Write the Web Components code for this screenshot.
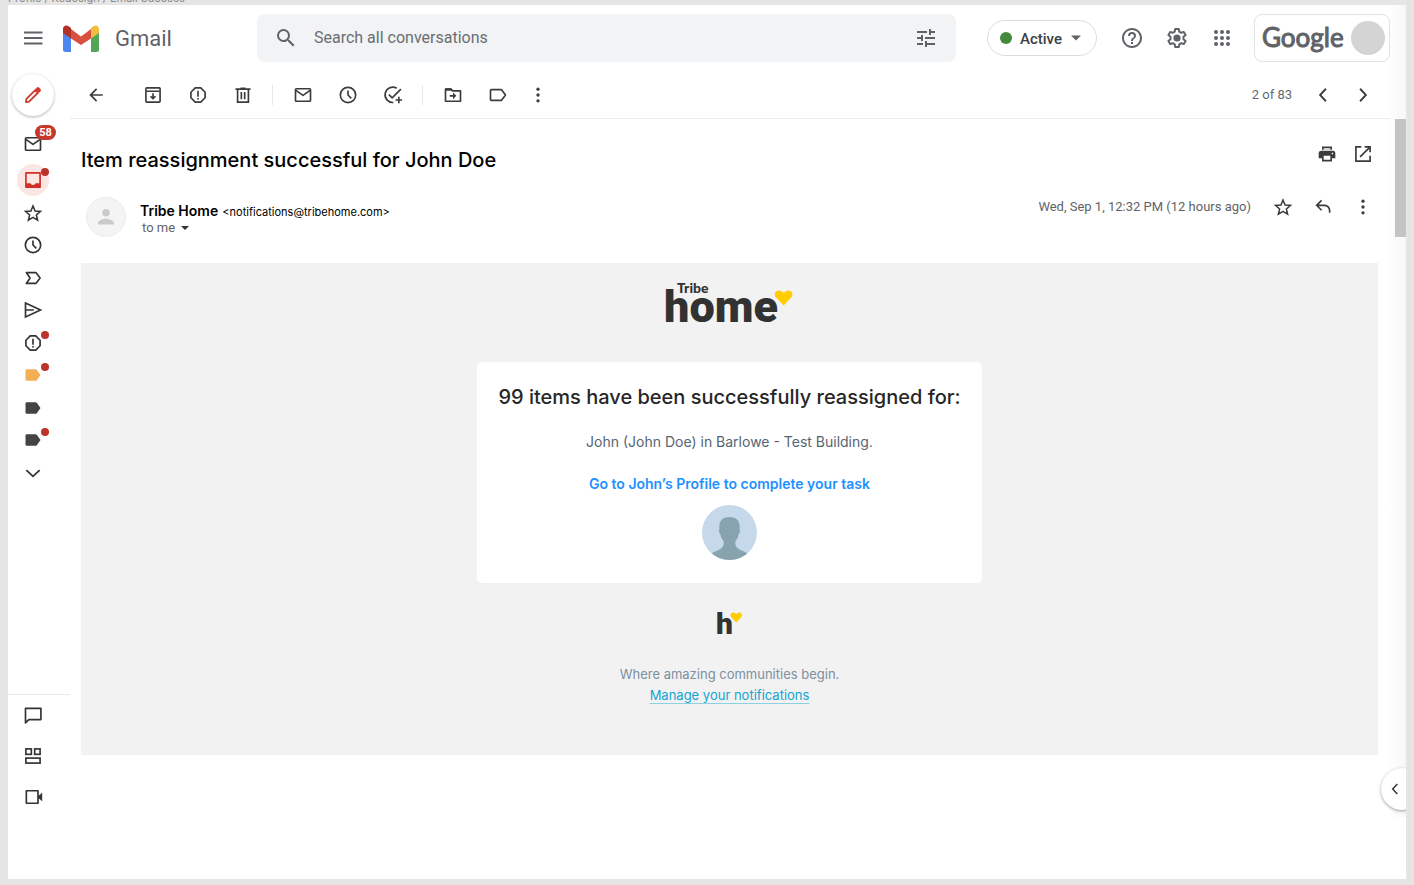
<!DOCTYPE html>
<html lang="en">
<head>
<meta charset="utf-8">
<title>Gmail</title>
<style>
html,body{margin:0;height:100%}
body{background:#e5e5e5;font-family:Roboto,"Liberation Sans",sans-serif;color:#202124}
</style>
</head>
<body>
<mail-app></mail-app>
<script>
const ICONS = {
menu:'<path d="M3 5.500h18.500v2H3zM3 11h18.500v2H3zM3 16.500h18.500v2H3z"/>',
search:'<path d="M15.5 14h-.79l-.28-.27A6.47 6.47 0 0 0 16 9.5 6.5 6.5 0 1 0 9.5 16c1.61 0 3.09-.59 4.23-1.57l.27.28v.79l5 4.99L20.49 19l-4.99-5zm-6 0a4.5 4.5 0 1 1 0-9 4.5 4.5 0 0 1 0 9z"/>',
tune:'<path d="M3 17v2h6v-2H3zM3 5v2h10V5H3zm10 16v-2h8v-2h-8v-2h-2v6h2zM7 9v2H3v2h4v2h2V9H7zm14 4v-2H11v2h10zm-6-4h2V7h4V5h-4V3h-2v6z"/>',
help:'<path d="M11 16h2v2h-2zM12 2C6.480 2 2 6.480 2 12s4.480 10 10 10 10-4.480 10-10S17.520 2 12 2zm0 18c-4.410 0-8-3.590-8-8s3.590-8 8-8 8 3.590 8 8-3.590 8-8 8zm0-14a4 4 0 0 0-4 4h2c0-1.100.9-2 2-2s2 .9 2 2c0 2-3 1.750-3 5h2c0-2.250 3-2.500 3-5a4 4 0 0 0-4-4z"/>',
settings:'<path fill="none" stroke="currentColor" stroke-width="2" stroke-linejoin="round" d="M10.200 3h3.600l.5 2.700 1.900 1.100 2.600-.9 1.800 3.100-2.100 1.800v2.400l2.100 1.800-1.800 3.100-2.600-.9-1.900 1.100-.5 2.700h-3.600l-.5-2.700-1.900-1.100-2.600.9-1.800-3.100 2.100-1.800v-2.400L3.400 9l1.800-3.100 2.600.9 1.900-1.100z"/><circle cx="12" cy="12" r="3.600"/>',
apps:'<g><circle cx="6" cy="6" r="2"/><circle cx="12" cy="6" r="2"/><circle cx="18" cy="6" r="2"/><circle cx="6" cy="12" r="2"/><circle cx="12" cy="12" r="2"/><circle cx="18" cy="12" r="2"/><circle cx="6" cy="18" r="2"/><circle cx="12" cy="18" r="2"/><circle cx="18" cy="18" r="2"/></g>',
caret:'<path d="M6 9l6 6 6-6z"/>',
pencil:'<path fill="none" stroke="currentColor" stroke-width="2.200" stroke-linejoin="round" d="M3.500 20.500l.6-3.800L14.700 6.100l3.200 3.200L7.300 19.900z"/><path d="M14.500 5.100l1.800-1.900a2.300 2.300 0 0 1 3.200 0l1.300 1.300a2.300 2.300 0 0 1 0 3.200L18.900 9.500z"/>',
back:'<path d="M20 11H7.830l5.590-5.590L12 4l-8 8 8 8 1.410-1.410L7.830 13H20z"/>',
archive:'<g fill="none" stroke="currentColor" stroke-width="2" stroke-linejoin="round"><rect x="3.500" y="3.500" width="17" height="17" rx="1"/><path d="M4 7.500h16M12 10v6.500M9 13.500l3 3 3-3"/></g>',
report:'<path fill="none" stroke="currentColor" stroke-width="2" stroke-linejoin="round" d="M8.700 3.500h6.600l5.200 5.200v6.600l-5.200 5.200H8.700l-5.200-5.200V8.700z"/><path d="M11 7h2v7h-2zM11 15.500h2v2h-2z"/>',
trash:'<g fill="none" stroke="currentColor" stroke-width="2"><path d="M3 5h18M5.500 5v15.500h13V5"/><path d="M10 8.500v8.500M14 8.500v8.500"/></g><path d="M9 3h6v2H9z"/>',
mail:'<g fill="none" stroke="currentColor" stroke-width="2" stroke-linejoin="round"><rect x="3" y="4.500" width="18" height="15" rx="1"/><path d="M3.500 6.500L12 12.500l8.500-6"/></g>',
clock:'<g fill="none" stroke="currentColor" stroke-width="2"><circle cx="12" cy="12" r="9.200"/><path d="M12 6.500V12l4 4"/></g>',
task:'<g fill="none" stroke="currentColor" stroke-width="2"><path d="M16.500 4A9.200 9.200 0 1 0 12.500 21M7 11.500l4 4L21.500 5M19 14v8M15 18h8"/></g>',
move:'<path fill="none" stroke="currentColor" stroke-width="2" stroke-linejoin="round" d="M3 5h6.500l2 2H21v12.500H3z"/><path d="M3 4h7l2 3H3zM12 9l4 4-4 4v-3H8v-2h4z"/>',
label:'<path fill="none" stroke="currentColor" stroke-width="2" stroke-linejoin="round" d="M4 5.500h12L21 12l-5 6.500H4a1 1 0 0 1-1-1v-11a1 1 0 0 1 1-1z"/>',
labelfill:'<path d="M4.500 5H15c.700 0 1.300.3 1.600.8L21 12l-4.400 6.200c-.3.500-.9.800-1.600.8H4.500A1.500 1.500 0 0 1 3 17.500v-11A1.500 1.500 0 0 1 4.500 5z"/>',
more:'<circle cx="12" cy="5" r="2"/><circle cx="12" cy="12" r="2"/><circle cx="12" cy="19" r="2"/>',
left:'<path fill="none" stroke="currentColor" stroke-width="2.200" d="M15.500 4.500L8.500 12l7 7.500"/>',
right:'<path fill="none" stroke="currentColor" stroke-width="2.200" d="M8.500 4.500l7 7.500-7 7.500"/>',
down:'<path fill="none" stroke="currentColor" stroke-width="2.200" d="M4 8.500l8 7.500 8-7.500"/>',
inbox:'<path fill="none" stroke="currentColor" stroke-width="2" stroke-linejoin="round" d="M3.500 3.500h17v17h-17z"/><path d="M3 16h6c.5 1.300 1.500 2 3 2s2.500-.7 3-2h6v5H3z"/>',
star:'<path fill="none" stroke="currentColor" stroke-width="1.800" d="M12 3.600l2.500 6 6.500.5-4.950 4.250 1.500 6.300L12 17.300l-5.550 3.350 1.500-6.300L3 10.100l6.500-.5z"/>',
important:'<path fill="none" stroke="currentColor" stroke-width="2" stroke-linejoin="round" d="M4 5.500h11.500L20.500 12l-5 6.500H4L8.500 12z"/>',
send:'<path fill="none" stroke="currentColor" stroke-width="2" d="M3 3.700L21 12 3 20.300zM3 12h10"/>',
chat:'<path fill="none" stroke="currentColor" stroke-width="2" stroke-linejoin="round" d="M3 21.500V4h18.500v13.500H7z"/>',
rooms:'<g fill="none" stroke="currentColor" stroke-width="2"><rect x="3.500" y="3.500" width="6.500" height="6.500"/><rect x="14" y="3.500" width="6.500" height="6.500"/><rect x="3.500" y="14.500" width="17" height="6"/></g>',
video:'<path fill="none" stroke="currentColor" stroke-width="2" stroke-linejoin="round" d="M4 4.500h14v15H4z"/><path d="M18 11l5-4v10l-5-4z"/>',
print:'<path d="M6 3h12v4H6zM5 8h14a3 3 0 0 1 3 3v6h-4v4H6v-4H2v-6a3 3 0 0 1 3-3z"/><path fill="#fff" d="M8 5h8v2H8zM8 14h8v5H8z"/><circle fill="#fff" cx="18.500" cy="11.500" r="1"/>',
open:'<path d="M19.500 19.500h-15v-15H10v-2H2.500v19h19V14h-2zM14 2.500v2h4.100l-10.300 10.300 1.400 1.400L19.500 5.900V10h2V2.500z"/>',
reply:'<path d="M10 9h3c5 0 8 3 8 8v2h-2v-2c0-4-2-6-6-6H6.800L11 15.200 9.600 16.600 3 10l6.600-6.600L11 4.800 6.800 9z"/>',
person:'<circle cx="12" cy="7" r="4.500"/><path d="M2.500 21v-2c0-3 6-5 9.500-5s9.500 2 9.500 5v2z"/>'
};
function define(name, html, setup){
  const t = document.createElement('template');
  t.innerHTML = html;
  customElements.define(name, class extends HTMLElement{
    connectedCallback(){
      if(this.shadowRoot) return;
      this.attachShadow({mode:'open'}).append(t.content.cloneNode(true));
      if(setup) setup(this, this.shadowRoot);
    }
  });
}

define('g-icon','<style>:host{display:inline-flex;flex:none;width:20px;height:20px}svg{width:100%;height:100%;fill:currentColor;display:block}</style><svg viewBox="0 0 24 24" aria-hidden="true"></svg>',
  (el,r)=>{ r.querySelector('svg').innerHTML = ICONS[el.getAttribute('name')]; });

define('icon-button',`<style>
:host{display:flex;flex:none;width:45px;height:40px;color:#3c3c3c}
button{all:unset;box-sizing:border-box;width:100%;height:100%;display:flex;align-items:center;justify-content:center;cursor:pointer}
:host([large]) g-icon{width:24px;height:24px}
:host([large]){color:#5f6368}
</style><button type="button"></button>`,
  (el,r)=>{ const b=r.querySelector('button'); b.setAttribute('aria-label',el.getAttribute('label')); b.innerHTML='<g-icon name="'+el.getAttribute('icon')+'"></g-icon>'; });

define('nav-item',`<style>
:host{display:flex;flex:1;position:relative;width:50px;align-items:center;justify-content:center;color:#333}
a{display:flex;align-items:center;justify-content:center;width:32px;height:32px;border-radius:50%;color:inherit;text-decoration:none}
:host([active]) a{background:#fbe6e4;color:#d03025}
:host([orange]) a{color:#f4ae56}
:host([dark]) a{color:#444}
i{position:absolute;left:33px;top:calc(50% - 12px);width:8px;height:8px;border-radius:50%;background:#ba342b}
b{position:absolute;left:27px;top:calc(50% - 19px);min-width:21px;height:15px;border-radius:8px;background:#c5392d;color:#fff;font:700 11px/15px Roboto,sans-serif;text-align:center}
</style><a href="#"></a>`,
  (el,r)=>{ const a=r.querySelector('a'); a.setAttribute('aria-label',el.getAttribute('label')); a.innerHTML='<g-icon name="'+el.getAttribute('icon')+'"></g-icon>';
    if(el.hasAttribute('dot')) r.append(document.createElement('i'));
    if(el.hasAttribute('count')){const b=document.createElement('b'); b.textContent=el.getAttribute('count'); r.append(b);} });

define('app-header',`<style>
:host{display:flex;align-items:center;height:66px;padding-right:16px;box-sizing:border-box}
.brand{display:flex;align-items:center;width:249px;flex:none;color:#5f6368}
.brand icon-button{width:50px}
.brand svg{width:36px;height:27px;margin:0 16px 0 5px}
.brand span{font-size:22px;line-height:28px;padding-top:2px}
form{flex:1;display:flex;align-items:center;height:48px;background:#f1f3f4;border-radius:8px;margin-right:31px;color:#5f6368;min-width:0}
form icon-button{width:57px}
form icon-button:last-child{width:60px}
input{all:unset;flex:1;min-width:0;font-size:16px;line-height:24px;color:#5f6368}
input::placeholder{color:#6a6e73;opacity:1}
.status{all:unset;box-sizing:border-box;display:flex;align-items:center;width:110px;height:36px;margin-right:12px;padding:0 11px 0 12px;border:1px solid #dadce0;border-radius:18px;font-size:15px;font-weight:500;color:#3c4043;cursor:pointer}
.status i{width:12px;height:12px;border-radius:50%;background:#43893e;margin-right:8px}
.status span{flex:1;padding-top:1px}
.status g-icon{width:20px;height:20px;color:#5f6368;margin-right:-1px}
.account{all:unset;box-sizing:border-box;display:flex;align-items:center;justify-content:space-between;width:136px;height:48px;margin-left:10px;padding:0 4px 0 7px;border:1px solid #e0e2e5;border-radius:8px;cursor:pointer}
.account span{font:400 26px/32px Lato,sans-serif;color:#5f6368;-webkit-text-stroke:1px #5f6368;padding-bottom:2px}
.account i{width:34px;height:34px;border-radius:50%;background:#d4d4d4}
</style>
<div class="brand"><icon-button icon="menu" label="Main menu" large></icon-button>
<svg viewBox="0 0 36 27" aria-hidden="true"><path fill="#4d86ee" d="M0 7l8 6v14H2.500A2.500 2.500 0 0 1 0 24.500z"/><path fill="#53a659" d="M36 7l-8 6v14h5.500a2.500 2.500 0 0 0 2.500-2.500z"/><path fill="#d94f3f" d="M8 4l10 7.500L28 4v9.500L18 20 8 13.500z"/><path fill="#b43128" d="M0 8V4c0-3.500 3.500-4.500 6-2.500L8 3v10.500z"/><path fill="#f2bd42" d="M36 8V4c0-3.500-3.500-4.500-6-2.500L28 3v10.500z"/></svg>
<span>Gmail</span></div>
<form role="search"><icon-button icon="search" label="Search" large></icon-button><input type="text" aria-label="Search all conversations" placeholder="Search all conversations"><icon-button icon="tune" label="Search options" large></icon-button></form>
<button class="status" type="button"><i></i><span>Active</span><g-icon name="caret"></g-icon></button>
<icon-button icon="help" label="Support" large></icon-button><icon-button icon="settings" label="Settings" large></icon-button><icon-button icon="apps" label="Apps" large></icon-button>
<button class="account" type="button" aria-label="Google Account"><span>Google</span><i></i></button>`);

define('side-nav',`<style>
:host{display:flex;flex-direction:column;flex:none;width:62px}
.compose{all:unset;display:flex;align-items:center;justify-content:center;width:42px;height:42px;margin:3px 0 0 4px;border-radius:50%;background:#fff;color:#d03b30;box-shadow:0 1px 3px rgba(60,64,67,.4);cursor:pointer}
.mail{display:flex;width:50px;height:32px;margin:12px 0 4px}
nav{display:flex;flex-direction:column;height:325px;flex:none}
.apps{height:122px;margin-top:auto;margin-bottom:62px;border-top:1px solid #ebebeb}
</style>
<button class="compose" type="button" aria-label="Compose"><g-icon name="pencil"></g-icon></button>
<div class="mail"><nav-item icon="mail" label="Mail" count="58"></nav-item></div>
<nav aria-label="Mailboxes">
<nav-item icon="inbox" label="Inbox" active dot></nav-item><nav-item icon="star" label="Starred"></nav-item><nav-item icon="clock" label="Snoozed"></nav-item><nav-item icon="important" label="Important"></nav-item><nav-item icon="send" label="Sent"></nav-item><nav-item icon="report" label="Spam" dot></nav-item><nav-item icon="labelfill" label="Orange label" orange dot></nav-item><nav-item icon="labelfill" label="Label" dark></nav-item><nav-item icon="labelfill" label="Second label" dark dot></nav-item><nav-item icon="down" label="More"></nav-item>
</nav>
<nav class="apps" aria-label="Apps"><nav-item icon="chat" label="Chat"></nav-item><nav-item icon="rooms" label="Rooms"></nav-item><nav-item icon="video" label="Meet"></nav-item></nav>`);

define('mail-toolbar',`<style>
:host{display:flex;align-items:center;height:48px;box-sizing:border-box;border-bottom:1px solid #ececec;margin-right:16px;padding:0 7px 0 3px}
.back{margin-right:12px}
hr{width:1px;height:20px;border:0;margin:0 7px;background:#e6e6e6}
.narrow{width:40px}
.slim{width:36px}
span{margin-left:auto;font-size:13px;line-height:20px;color:#666a6e;padding-right:11px}
</style>
<icon-button class="back" icon="back" label="Back"></icon-button>
<icon-button icon="archive" label="Archive"></icon-button><icon-button icon="report" label="Report spam"></icon-button><icon-button icon="trash" label="Delete"></icon-button><hr>
<icon-button icon="mail" label="Mark as unread"></icon-button><icon-button icon="clock" label="Snooze"></icon-button><icon-button icon="task" label="Add to tasks"></icon-button><hr>
<icon-button icon="move" label="Move to"></icon-button><icon-button icon="label" label="Labels"></icon-button><icon-button class="slim" icon="more" label="More"></icon-button>
<span>2 of 83</span><icon-button class="narrow" icon="left" label="Newer"></icon-button><icon-button class="narrow" icon="right" label="Older"></icon-button>`);

define('message-header',`<style>
:host{display:block}
.row{display:flex;align-items:flex-start}
.subject{height:70px;align-items:center}
h1{flex:1;margin:0;padding-top:12px;font:500 20px/28px Inter,sans-serif;color:#000}
icon-button{width:40px;height:36px}
.subject icon-button{width:36px}
.subject .icons{margin-right:-3px}
.icons{display:flex;margin-right:-5px}
.avatar{display:flex;flex:none;align-items:center;justify-content:center;width:40px;height:40px;margin:8px 14px 0 5px;border-radius:50%;background:#f4f4f4;border:1px solid #ececec;color:#cacaca;box-sizing:border-box}
.from{flex:1;font:400 11px/16px Inter,sans-serif;color:#000;padding-top:14px}
.from strong{font-size:14px;font-weight:600;margin-right:1px}
.to{all:unset;display:flex;align-items:center;font:400 13px/16px Roboto,sans-serif;color:#5f6368;padding-left:2px;cursor:pointer}
.to g-icon{width:16px;height:16px;color:#333;margin-left:2px}
time{font-size:13px;line-height:36px;color:#5f6368;margin-right:12px}
</style>
<div class="row subject"><h1>Item reassignment successful for John Doe</h1><div class="icons"><icon-button icon="print" label="Print all"></icon-button><icon-button icon="open" label="In new window"></icon-button></div></div>
<div class="row"><div class="avatar"><g-icon name="person"></g-icon></div>
<div class="from"><strong>Tribe Home</strong> &lt;notifications@tribehome.com&gt;<button class="to" type="button">to me<g-icon name="caret"></g-icon></button></div>
<time>Wed, Sep 1, 12:32 PM (12 hours ago)</time><div class="icons"><icon-button icon="star" label="Star"></icon-button><icon-button icon="reply" label="Reply"></icon-button><icon-button icon="more" label="More"></icon-button></div></div>`);

define('tribe-logo',`<style>
:host{display:block;width:127px;height:41px}
svg{display:block;width:127px;height:41px;overflow:visible;font-family:Roboto,sans-serif;font-weight:900;fill:#323232}
.small{font-family:Lato,sans-serif}
</style><svg viewBox="0 0 127 41" role="img" aria-label="Tribe home"><text class="small" x="11" y="11" font-size="14">Tribe</text><text x="-2" y="40" font-size="45">home</text><path fill="#fc0" transform="translate(108 6) scale(.8)" d="M12 22L2.500 12C-.5 8.500 1.200 3 6 3c2.700 0 4.800 1.400 6 3.500C13.200 4.400 15.300 3 18 3c4.800 0 6.500 5.500 3.500 9z"/></svg>`);

define('tribe-mark',`<style>
:host{display:block;width:26px;height:24px}
svg{display:block;width:26px;height:24px;overflow:visible;font-family:Roboto,sans-serif;font-weight:900;fill:#323232}
</style><svg viewBox="0 0 26 24" role="img" aria-label="h"><text x="-1" y="23" font-size="30">h</text><path fill="#fc0" transform="translate(13) scale(.52)" d="M12 22L2.500 12C-.5 8.500 1.200 3 6 3c2.700 0 4.800 1.400 6 3.500C13.200 4.400 15.300 3 18 3c4.800 0 6.500 5.500 3.500 9z"/></svg>`);

define('email-card',`<style>
:host{display:flex;flex-direction:column;align-items:center;box-sizing:border-box;width:505px;max-width:100%;padding:21px 16px 23px;background:#fff;border-radius:5px;text-align:center;font-family:Inter,sans-serif}
h2{margin:0;font-size:20px;line-height:28px;font-weight:500;color:#262626}
p{margin:20px 0;font-size:14px;line-height:22px;color:#566573}
a{font-size:14px;line-height:22px;font-weight:600;color:#1e90ff;text-decoration:none}
svg{display:block;width:55px;height:55px;margin-top:10px}
</style><h2><slot name="title"></slot></h2><p><slot></slot></p><a href="#"><slot name="link"></slot></a>
<svg viewBox="0 0 55 55" aria-hidden="true"><defs><clipPath id="c"><circle cx="27.500" cy="27.500" r="27.500"/></clipPath></defs><g clip-path="url(#c)"><path fill="#c6d9ea" d="M0 0h55v55H0z"/><path fill="#87a4ae" d="M17.500 24c-1-7 2-12 10-12s11 5 10 12c1 1 .5 4-.8 5-.5 3-1.500 5-3.200 7-.8 5 1 7 5 9 3 1.500 6 2.500 8 4v8h-38v-8c2-1.500 5-2.500 8-4 4-2 6-4 5-9-1.700-2-2.700-4-3.200-7-1.300-1-1.800-4-.8-5z"/></g></svg>`);

define('email-body',`<style>
:host{display:flex;flex-direction:column;align-items:center;margin-top:26px;padding:19px 16px 49px;background:#f2f2f2;font:400 13px/21px Inter,sans-serif;color:#7d8fa0}
email-card{margin:39px 0 28px}
tribe-mark{margin-bottom:29px}
p{margin:0}
a{color:#13a5d2;text-decoration:underline;text-decoration-color:#8dd0e6;text-underline-offset:3px}
</style><tribe-logo></tribe-logo>
<email-card><span slot="title">99 items have been successfully reassigned for:</span>John (John Doe) in Barlowe - Test Building.<span slot="link">Go to John’s Profile to complete your task</span></email-card>
<tribe-mark></tribe-mark><p>Where amazing communities begin.</p><a href="#">Manage your notifications</a>`);

define('mail-app',`<style>
:host{display:flex;flex-direction:column;min-height:100vh;box-sizing:border-box;padding:0 8px 6px}
.caption{display:flex;align-items:flex-end;height:5px;overflow:hidden;font:400 11px/14px Inter,sans-serif;color:#8a8a8a}
.window{position:relative;flex:1;display:flex;flex-direction:column;overflow:hidden;background:linear-gradient(to right,rgba(255,255,255,0),#f7f7f7) right top/18px 812px no-repeat,#fff}
.body{display:flex;flex:1}
main{flex:1;min-width:0}
.scroll{display:flex;justify-content:space-between}
article{flex:1;min-width:0;padding:0 17px 0 11px}
.thumb{width:11px;height:118px;background:#c4c4c4}
.panel{all:unset;position:absolute;right:-17px;bottom:69px;width:42px;height:42px;box-sizing:border-box;padding-left:6px;display:flex;align-items:center;border-radius:50%;background:#fff;color:#333;box-shadow:0 1px 3px rgba(60,64,67,.5);cursor:pointer}
.panel g-icon{width:16px;height:16px}
</style><div class="caption"><span>Profile / Redesign / Email Success</span></div>
<div class="window"><app-header></app-header><div class="body"><side-nav></side-nav><main><mail-toolbar></mail-toolbar><div class="scroll"><article><message-header></message-header><email-body></email-body></article><div class="thumb"></div></div></main></div>
<button class="panel" type="button" aria-label="Show side panel"><g-icon name="left"></g-icon></button></div>`);
</script>
</body>
</html>
